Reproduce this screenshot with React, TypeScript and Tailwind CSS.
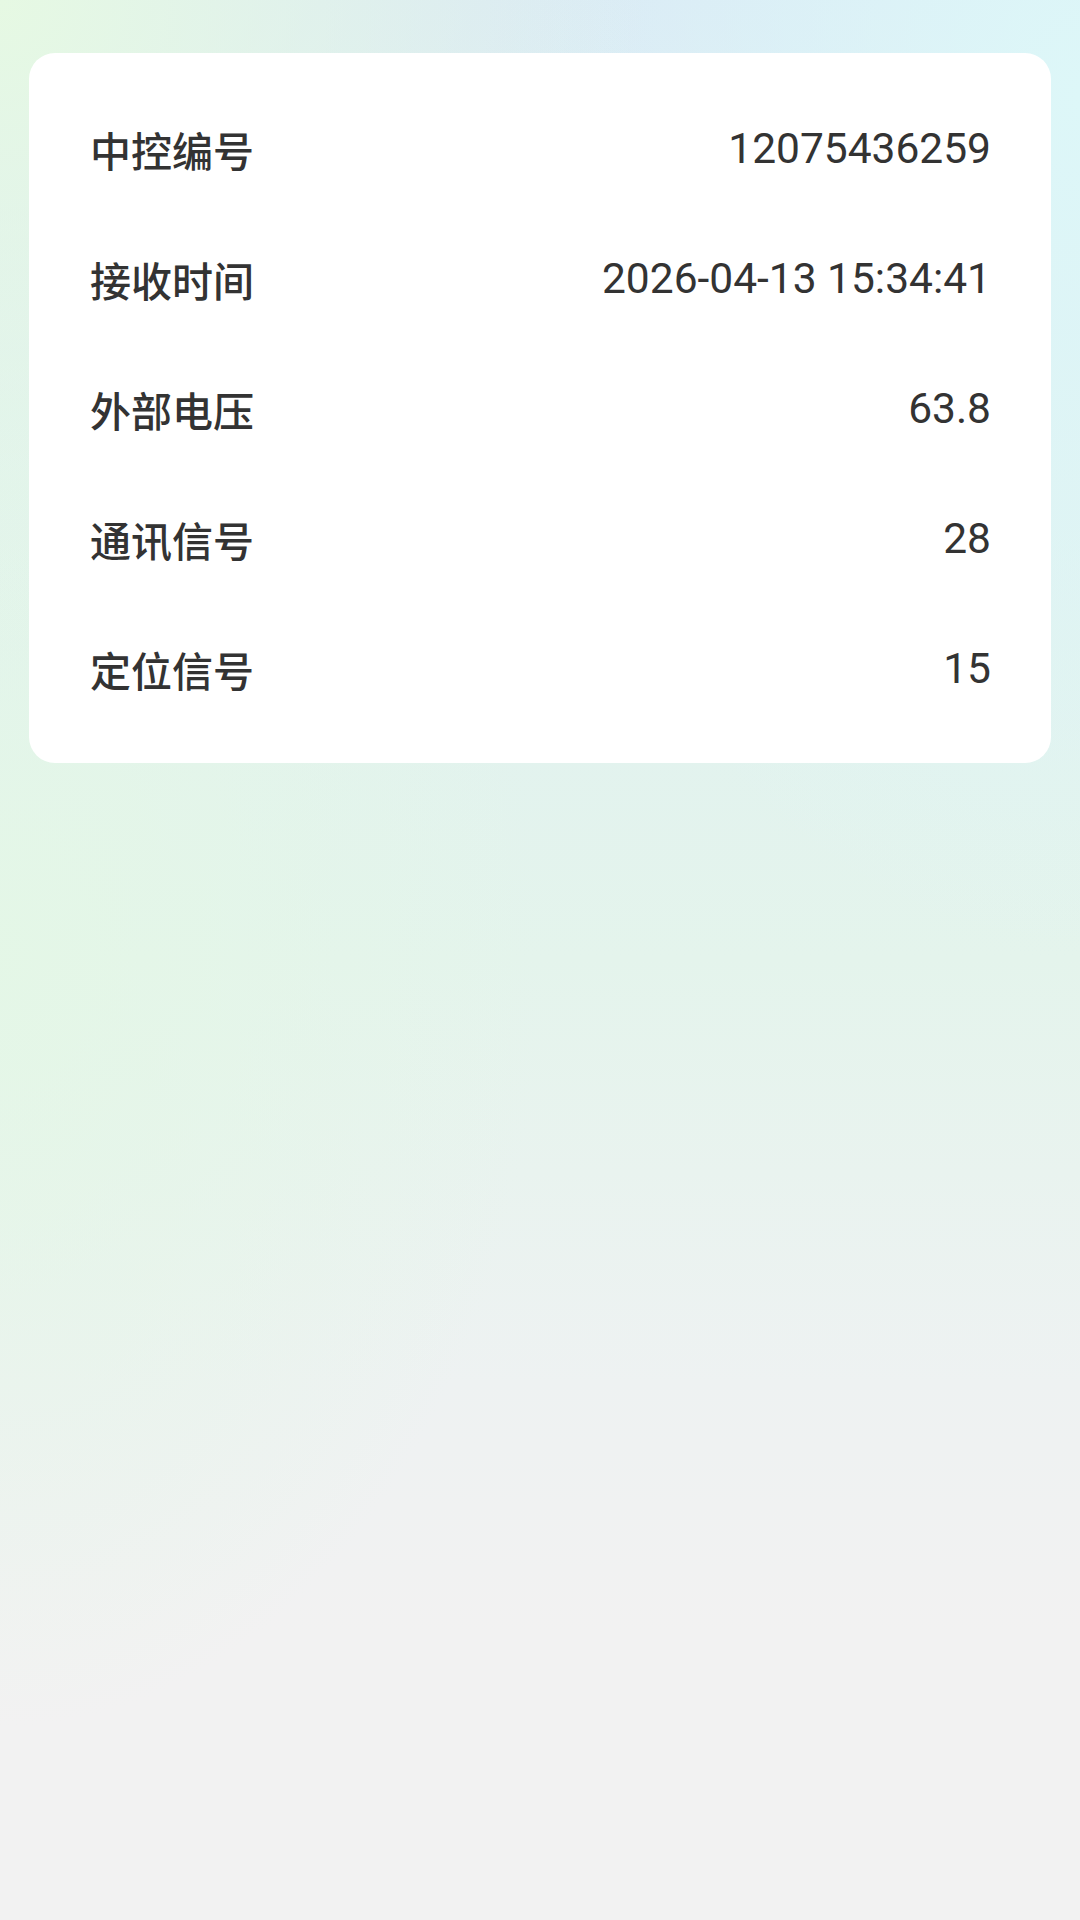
import React from "react";

const rows: [string, string][] = [
  ["中控编号", "12075436259"],
  ["接收时间", "2026-04-13 15:34:41"],
  ["外部电压", "63.8"],
  ["通讯信号", "28"],
  ["定位信号", "15"],
];

export default function App() {
  return (
    <div className="min-h-screen w-full bg-[#f2f2f2] bg-[radial-gradient(ellipse_60%_35%_at_0%_0%,#e6f9e3_0%,rgba(230,249,227,0)_100%),radial-gradient(ellipse_50%_40%_at_0%_50%,rgba(228,247,230,0.9)_0%,rgba(228,247,230,0)_100%),radial-gradient(ellipse_55%_45%_at_100%_5%,#ddf7f8_0%,rgba(221,247,248,0)_100%),linear-gradient(180deg,#dae9f5_0%,#e0f1f1_25%,#e4f4ec_50%,#eef2f2_72%,#f2f2f2_85%)] pt-[53px] px-[29px]">
      <div className="rounded-[26px] bg-white py-[30px] pl-[61px] pr-[60px]">
        {rows.map(([label, value]) => (
          <div key={label} className="flex h-[130px] items-center justify-between">
            <span className="pt-[2px] text-[41px] font-medium text-[#333333] leading-none font-['Noto_Sans_CJK_SC',sans-serif]">
              {label}
            </span>
            <span className="pt-[3px] text-[42.5px] font-normal text-[#333333] leading-none font-['Roboto',sans-serif]">
              {value}
            </span>
          </div>
        ))}
      </div>
    </div>
  );
}
